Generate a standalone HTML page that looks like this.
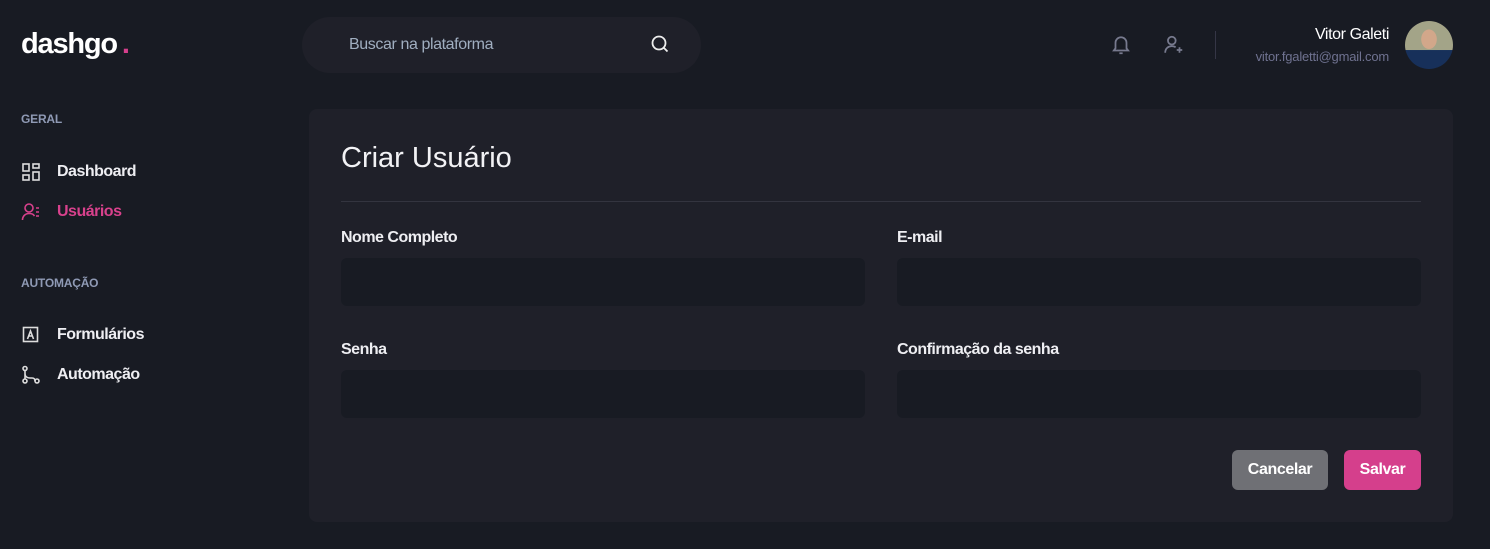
<!DOCTYPE html>
<html><head><meta charset="utf-8"><style>
*{box-sizing:border-box;margin:0;padding:0}
body{width:1490px;height:549px;background:#181b23;font-family:"Liberation Sans",sans-serif;color:#eeeef2;position:relative;overflow:hidden}
.abs{position:absolute}
.logo{left:21px;top:28px;font-size:29px;font-weight:bold;letter-spacing:-1.2px;color:#fff}
.logo span{color:#d53f8c;margin-left:5px}
.sec{font-size:12px;font-weight:bold;color:#8f9ab5;left:21px;letter-spacing:-0.2px}
.item{left:21px;display:flex;align-items:center;font-size:16px;font-weight:bold;letter-spacing:-0.5px}
.item svg{width:20px;height:20px;margin-right:16px}
.search{left:302px;top:17px;width:399px;height:56px;background:#1f2029;border-radius:28px}
.search .t{left:47px;top:19px;font-size:16px;color:#a0aec0;letter-spacing:-0.4px}
.card{left:309px;top:109px;width:1144px;height:413px;background:#1f2029;border-radius:8px}
label{position:absolute;font-size:16px;font-weight:bold;letter-spacing:-0.5px}
.inp{position:absolute;width:524px;height:48px;background:#181b23;border-radius:6px}
.btn{position:absolute;top:450px;height:40px;border-radius:6px;font-weight:bold;font-size:16px;color:#fff;text-align:center;line-height:40px;letter-spacing:-0.4px}
</style></head><body>
<div class="abs logo">dashgo<span>.</span></div>
<div class="abs search"><div class="abs t">Buscar na plataforma</div>
<svg class="abs" style="left:348px;top:17px" width="20" height="20" viewBox="0 0 20 20" fill="none" stroke="#eee" stroke-width="1.8"><circle cx="9" cy="9" r="6.5"/><path d="M14 14l3.5 3.5"/></svg></div>
<svg class="abs" style="left:1110px;top:34px" width="22" height="22" viewBox="0 0 20 20" fill="none" stroke="#777a8e" stroke-width="1.6"><path d="M3.5 15h13l-1.5-2V8a5 5 0 0 0-10 0v5z"/><path d="M8.5 17.5h3"/></svg>
<svg class="abs" style="left:1163px;top:34px" width="22" height="22" viewBox="0 0 20 20" fill="none" stroke="#777a8e" stroke-width="1.6"><circle cx="8" cy="6" r="3.5"/><path d="M2 17c0-4 3-6 6-6 1.5 0 2.5.4 3.5 1"/><path d="M15 12v5M12.5 14.5h5"/></svg>
<div class="abs" style="left:1215px;top:31px;width:1px;height:28px;background:#353646"></div>
<div class="abs" style="right:101px;top:26px;font-size:16px;color:#fff;letter-spacing:-0.4px">Vitor Galeti</div>
<div class="abs" style="right:101px;top:49px;font-size:13px;color:#6f7290;letter-spacing:-0.2px">vitor.fgaletti@gmail.com</div>
<div class="abs" style="left:1405px;top:21px;width:48px;height:48px;border-radius:50%;background:radial-gradient(ellipse 8px 10px at 50% 38%,#d2a78a 0 95%,transparent 100%),linear-gradient(#a3a488 0 60%,#17305a 61%)"></div>

<div class="abs sec" style="top:112px">GERAL</div>
<div class="abs item" style="top:162px"><svg viewBox="0 0 20 20" fill="none" stroke="#ddd" stroke-width="1.6"><rect x="2" y="2" width="6" height="7"/><rect x="12" y="2" width="6" height="4"/><rect x="2" y="13" width="6" height="5"/><rect x="12" y="10" width="6" height="8"/></svg>Dashboard</div>
<div class="abs item" style="top:202px;color:#d8418c"><svg viewBox="0 0 20 20" fill="none" stroke="#d8418c" stroke-width="1.6"><circle cx="8" cy="6" r="4"/><path d="M1.5 18c0-4 3-6.5 6.5-6.5s4.5 1 5.5 2.5M15 6h3M15 10h3M15 14h3"/></svg>Usuários</div>
<div class="abs sec" style="top:276px">AUTOMAÇÃO</div>
<div class="abs item" style="top:325px"><svg viewBox="0 0 20 20" fill="none" stroke="#ddd" stroke-width="1.6"><rect x="2.5" y="2.5" width="14" height="14"/><path d="M6.5 14l3-8 3 8M7.7 11h3.6"/></svg>Formulários</div>
<div class="abs item" style="top:365px"><svg viewBox="0 0 20 20" fill="none" stroke="#ddd" stroke-width="1.6"><circle cx="4" cy="3.5" r="2"/><circle cx="4" cy="16" r="2"/><circle cx="16" cy="16" r="2"/><path d="M4 5.5v8.5M4 9c0 3 3 4 5 4h2c2 0 3 1 3 3"/></svg>Automação</div>

<div class="abs card"></div>
<div class="abs" style="left:341px;top:142px;font-size:29px;color:#f2f2f5">Criar Usuário</div>
<div class="abs" style="left:341px;top:201px;width:1080px;height:1px;background:#33343f"></div>
<label style="left:341px;top:229px">Nome Completo</label>
<label style="left:897px;top:229px">E-mail</label>
<div class="inp" style="left:341px;top:258px"></div>
<div class="inp" style="left:897px;top:258px"></div>
<label style="left:341px;top:341px">Senha</label>
<label style="left:897px;top:341px">Confirmação da senha</label>
<div class="inp" style="left:341px;top:370px"></div>
<div class="inp" style="left:897px;top:370px"></div>
<div class="btn" style="left:1232px;width:96px;background:#6f7075">Cancelar</div>
<div class="btn" style="left:1344px;width:77px;background:#d53f8c">Salvar</div>
</body></html>
